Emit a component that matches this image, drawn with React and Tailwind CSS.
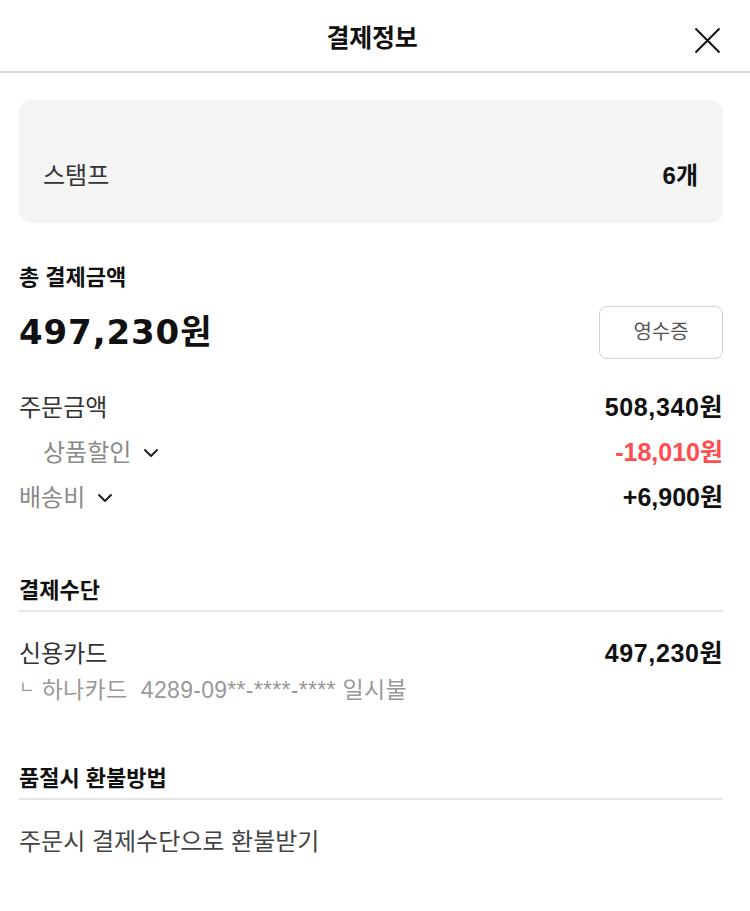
import React from "react";

const Chevron = () => (
  <svg width="16" height="16" viewBox="0 0 16 16" fill="none" className="ml-[12px]">
    <path d="M2 5 L8 11 L14 5" stroke="#222" strokeWidth="2" strokeLinecap="round" strokeLinejoin="round" />
  </svg>
);

export default function App() {
  return (
    <div
      className="w-[750px] h-[911px] bg-white text-[#111]"
      style={{ fontFamily: '"Liberation Sans", "Noto Sans CJK KR", sans-serif' }}
    >
      <header className="relative h-[73px] flex items-center justify-center pt-[7px] border-b-2 border-[#dcdcdc]">
        <h1 className="text-[25px] font-bold tracking-[-0.3px] pr-[6px]">결제정보</h1>
        <button className="absolute right-[29px] top-[27px]">
          <svg width="27" height="27" viewBox="0 0 27 27" fill="none">
            <path d="M1.5 1.5 L25.5 25.5 M25.5 1.5 L1.5 25.5" stroke="#111" strokeWidth="2" />
          </svg>
        </button>
      </header>

      <div className="pl-[19px] pr-[27px]">
        <div className="mt-[27px] h-[123px] rounded-[12px] bg-[#f4f4f4] flex items-center justify-between pl-[24px] pr-[25px] pt-[29px]">
          <span className="text-[24px] text-[#333]">스탬프</span>
          <span className="text-[24px] font-bold">6개</span>
        </div>

        <div className="mt-[39px] h-[30px] flex items-center text-[22px] font-bold">총 결제금액</div>
        <div className="mt-[14px] h-[52px] flex items-center justify-between">
          <div
            className="text-[34px] font-bold tracking-[0.9px] leading-none"
            style={{ fontFamily: '"DejaVu Sans", "Noto Sans CJK KR", sans-serif' }}
          >
            497,230원
          </div>
          <button className="w-[124px] h-[53px] rounded-[8px] border border-[#d2d2d2] text-[20px] text-[#555] bg-white">
            영수증
          </button>
        </div>

        <div className="mt-[27px] flex flex-col">
          <div className="flex items-center justify-between h-[45px]">
            <span className="text-[24px] text-[#333]">주문금액</span>
            <span className="text-[25px] font-bold tracking-[0.6px]">508,340원</span>
          </div>
          <div className="flex items-center justify-between h-[45px]">
            <span className="flex items-center pl-[24px] text-[24px] text-[#8a8a8a]">
              상품할인
              <Chevron />
            </span>
            <span className="text-[25px] font-bold text-[#ff4d4f]">-18,010원</span>
          </div>
          <div className="flex items-center justify-between h-[45px]">
            <span className="flex items-center text-[24px] text-[#8a8a8a]">
              배송비
              <Chevron />
            </span>
            <span className="text-[25px] font-bold">+6,900원</span>
          </div>
        </div>

        <div className="mt-[55px] pb-[5px] border-b-2 border-[#e6e6e6]">
          <div className="h-[30px] flex items-center text-[22px] font-bold">결제수단</div>
        </div>
        <div className="mt-[26px] h-[32px] flex items-center justify-between">
          <span className="text-[24px] text-[#333]">신용카드</span>
          <span className="text-[25px] font-bold tracking-[0.6px]">497,230원</span>
        </div>
        <div className="mt-[5px] h-[30px] flex items-center text-[23px] text-[#999]">
          <span className="text-[17px] mr-[7px] -translate-y-[2px]">ㄴ</span>
          <span className="tracking-[0.3px]">하나카드&nbsp;&nbsp;4289-09**-****-**** 일시불</span>
        </div>

        <div className="mt-[58px] pb-[5px] border-b-2 border-[#e6e6e6]">
          <div className="h-[30px] flex items-center text-[22px] font-bold">품절시 환불방법</div>
        </div>
        <div className="mt-[27px] h-[30px] flex items-center text-[24px] text-[#444]">
          주문시 결제수단으로 환불받기
        </div>
      </div>
    </div>
  );
}
